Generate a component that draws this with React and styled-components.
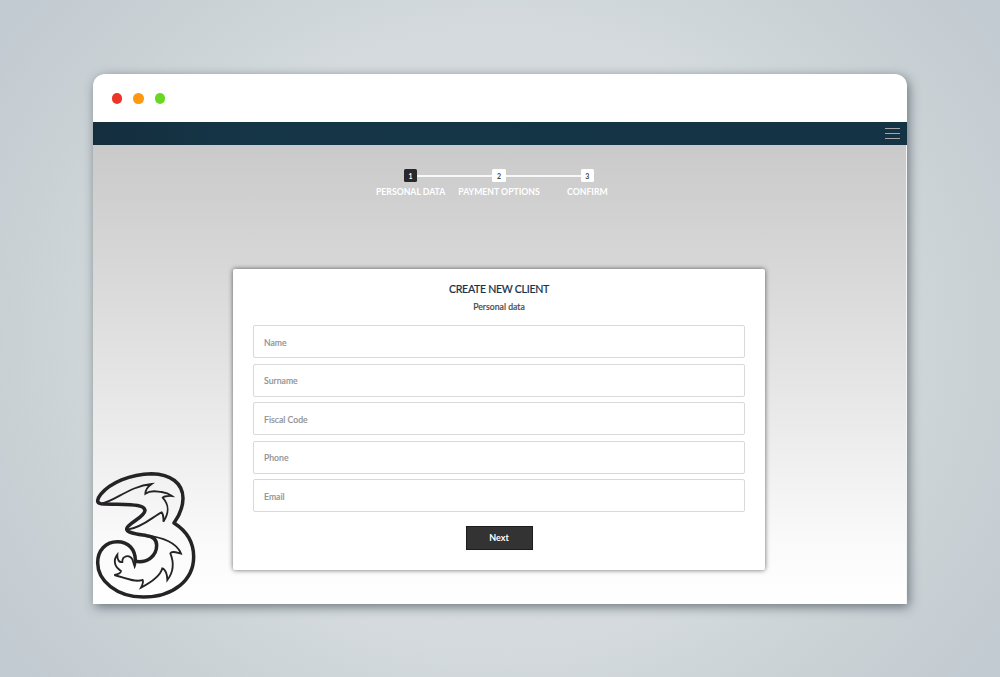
import React from "react";
import styled, { createGlobalStyle } from "styled-components";

const GlobalStyle = createGlobalStyle`
  *, *::before, *::after { box-sizing: border-box; }
  body { margin: 0; font-family: Lato, "Liberation Sans", sans-serif; }
`;

const Backdrop = styled.div`
  display: flex;
  justify-content: center;
  height: 677px;
  padding-top: 74px;
  overflow: hidden;
  background: radial-gradient(ellipse 720px 640px at 50% 50%, #d7dddf 0%, #d4dadd 48%, #c9d1d5 68%, #bdc5cf 100%);
`;

const BrowserWindow = styled.div`
  display: flex;
  flex-direction: column;
  width: 814px;
  height: 530px;
  border-radius: 12px 12px 0 0;
  background: #fff;
  box-shadow: 2px 3px 11px rgba(55, 68, 75, 0.65);
`;

const TitleBar = styled.div`
  display: flex;
  align-items: center;
  gap: 11px;
  height: 48px;
  padding: 1px 0 0 18.6px;
`;

const WindowDot = styled.span`
  width: 10.6px;
  height: 10.6px;
  border-radius: 50%;
  background: ${({ $color }) => $color};
`;

const NavBar = styled.nav`
  display: flex;
  align-items: center;
  justify-content: flex-end;
  height: 23px;
  padding-right: 7px;
  background: linear-gradient(90deg, #142e3e, #153647 20%, #143445);
`;

const MenuButton = styled.button`
  display: flex;
  flex-direction: column;
  gap: 4px;
  width: 15px;
  padding: 0;
  border: 0;
  background: none;
`;

const MenuLine = styled.span`
  height: 1px;
  background: #a4a8aa;
`;

const Content = styled.main`
  position: relative;
  display: flex;
  flex-direction: column;
  align-items: center;
  height: 459px;
  padding: 24px 1px 0 0;
  border-right: 1px solid #f5f5f5;
  background: linear-gradient(#cacaca, #d6d6d6 24%, #e9e9e9 58%, #fafafa 87%, #fff);
`;

const Steps = styled.ol`
  display: flex;
  height: 100px;
  margin: 0;
  padding: 0;
  list-style: none;
`;

const Step = styled.li`
  display: flex;
  flex-direction: column;
  align-items: center;
  width: 88.4px;
`;

const StepTrack = styled.div`
  display: flex;
  align-items: center;
  width: 100%;
`;

const StepLine = styled.span`
  flex: 1;
  height: 2px;
  background: ${({ $hidden }) => ($hidden ? "transparent" : "#f8f8f8")};
`;

const StepNumber = styled.span`
  width: 13.4px;
  height: 13.4px;
  border-radius: 1.5px;
  font-size: 7px;
  font-weight: 700;
  line-height: 14px;
  text-align: center;
  color: ${({ $active }) => ($active ? "#fff" : "#444")};
  background: ${({ $active }) => ($active ? "#292929" : "#fff")};
`;

const StepLabel = styled.span`
  margin-top: 4px;
  font-size: 8.7px;
  font-weight: 700;
  line-height: 11px;
  white-space: nowrap;
  color: #fff;
`;

const Card = styled.form`
  display: flex;
  flex-direction: column;
  align-items: center;
  width: 532px;
  height: 301px;
  padding: 13px 20px 0;
  border-radius: 2px;
  background: #fff;
  box-shadow: 0 0 5px rgba(0, 0, 0, 0.6);
`;

const Title = styled.h1`
  margin: 0;
  font-size: 10.6px;
  font-weight: 500;
  line-height: 14px;
  letter-spacing: -0.3px;
  color: #19334a;
  -webkit-text-stroke: 0.15px currentColor;
`;

const Subtitle = styled.p`
  margin: 5px 0 12px;
  font-size: 8.7px;
  font-weight: 500;
  line-height: 12px;
  color: #484848;
  -webkit-text-stroke: 0.15px currentColor;
`;

const Fields = styled.div`
  display: flex;
  flex-direction: column;
  gap: 5.6px;
  width: 100%;
`;

const Field = styled.input`
  width: 100%;
  height: 33px;
  padding: 1px 10px 0;
  border: 1.5px solid #d9d9d9;
  border-radius: 2px;
  font: 500 8.7px/12px Lato, "Liberation Sans", sans-serif;
  background: #fff;

  &::placeholder {
    color: #929292;
    opacity: 1;
    -webkit-text-stroke: 0.15px currentColor;
  }
`;

const NextButton = styled.button`
  width: 67px;
  height: 24px;
  margin-top: 13.4px;
  padding: 0;
  border: 1px solid #1c1c1c;
  font: 700 9px/12px Lato, "Liberation Sans", sans-serif;
  color: #fff;
  background: #333;
`;

const Logo = styled.svg`
  position: absolute;
  left: 0;
  bottom: 4px;
  width: 104px;
  height: 130px;
  fill: none;
  stroke: #252326;
  stroke-linejoin: round;
`;

const STEPS = ["PERSONAL DATA", "PAYMENT OPTIONS", "CONFIRM"];
const FIELDS = ["Name", "Surname", "Fiscal Code", "Phone", "Email"];

function ThreeLogo() {
  return (
    <Logo viewBox="39 30 312 390" aria-label="Three">
      <path
        strokeWidth="10.5"
        d="M62 131C49 128 51 117 62 103C90 69 150 42 215 41C272 42 309 70 309 115C309 145 299 165 282 189C318 212 341 245 341 290C341 360 280 411 190 411C110 411 53 362 53 308C53 270 78 245 112 245C145 245 167 268 166 304C202 310 230 288 230 256C230 238 218 229 200 227C170 222 140 219 140 207C142 190 194 172 195 151C192 131 150 135 62 131Z"
      />
      <path
        strokeWidth="5.5"
        strokeLinejoin="miter"
        d="M64 131C104 124 150 78 215 72C205 79 196 91 196 101C214 88 230 95 245 96C259 98 269 103 276 108C262 107 250 110 248 113C265 132 271 153 250 185C251 173 251 164 245 157C220 168 190 202 142 209"
      />
      <path
        strokeWidth="5.5"
        strokeLinejoin="miter"
        d="M195 226C250 231 292 250 303 281C288 277 275 272 271 280C284 312 279 338 262 360C262 345 257 328 247 325C241 348 216 366 183 383C188 373 191 365 188 360C160 368 132 352 103 345C113 343 123 340 123 333C104 321 98 302 112 284C111 300 118 308 127 306C126 288 148 282 157 298L164 320C167 313 167 309 166 303"
      />
    </Logo>
  );
}

export default function App() {
  return (
    <Backdrop>
      <GlobalStyle />
      <BrowserWindow>
        <TitleBar>
          <WindowDot $color="#ec3528" />
          <WindowDot $color="#ff980f" />
          <WindowDot $color="#69d825" />
        </TitleBar>
        <NavBar>
          <MenuButton aria-label="Menu">
            <MenuLine />
            <MenuLine />
            <MenuLine />
          </MenuButton>
        </NavBar>
        <Content>
          <Steps>
            {STEPS.map((label, i) => (
              <Step key={label}>
                <StepTrack>
                  <StepLine $hidden={i === 0} />
                  <StepNumber $active={i === 0}>{i + 1}</StepNumber>
                  <StepLine $hidden={i === STEPS.length - 1} />
                </StepTrack>
                <StepLabel>{label}</StepLabel>
              </Step>
            ))}
          </Steps>
          <Card>
            <Title>CREATE NEW CLIENT</Title>
            <Subtitle>Personal data</Subtitle>
            <Fields>
              {FIELDS.map((name) => (
                <Field key={name} placeholder={name} aria-label={name} />
              ))}
            </Fields>
            <NextButton type="button">Next</NextButton>
          </Card>
          <ThreeLogo />
        </Content>
      </BrowserWindow>
    </Backdrop>
  );
}
